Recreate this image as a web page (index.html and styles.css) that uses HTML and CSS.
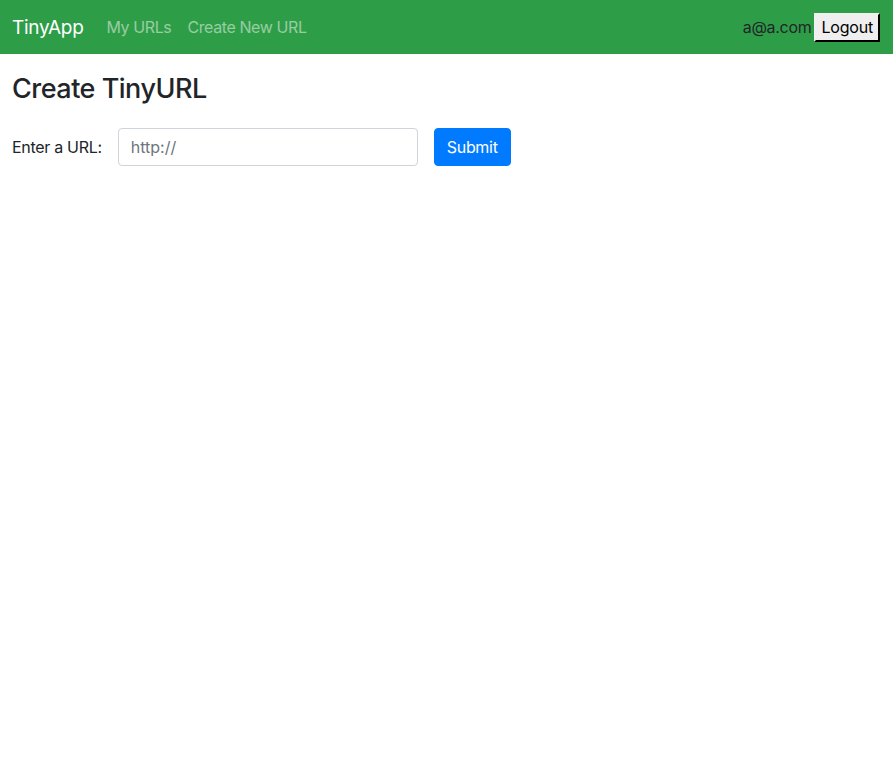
FILE: index.html
```html
<!DOCTYPE html>
<html>
<head>
<meta charset="utf-8">
<title>TinyApp</title>
<link rel="stylesheet" href="styles.css">
</head>
<body>
<nav class="navbar">
  <a class="brand" href="#">TinyApp</a>
  <div class="nav-links">
    <a class="nav-link" href="#">My URLs</a>
    <a class="nav-link" href="#">Create New URL</a>
  </div>
  <div class="user">
    <span class="email">a@a.com</span>
    <button class="logout">Logout</button>
  </div>
</nav>
<main class="content">
  <h3 class="title">Create TinyURL</h3>
  <form class="url-form">
    <label class="label" for="longURL">Enter a URL:</label>
    <input class="input" id="longURL" type="text" placeholder="http://">
    <button class="submit" type="button">Submit</button>
  </form>
</main>
</body>
</html>
```
FILE: styles.css
```css
* { box-sizing: border-box; }
body {
  margin: 0;
  font-family: Inter, "Noto Sans", Roboto, sans-serif;
  color: #212529;
  background: #fff;
  font-size: 16px;
}
.navbar {
  height: 54px;
  background: #2e9d47;
  display: flex;
  align-items: center;
  padding: 0 13px 0 12px;
}
.brand {
  color: #fff;
  text-decoration: none;
  font-size: 19px;
  margin-right: 23px;
  letter-spacing: -0.3px;
}
.nav-links { display: flex; gap: 16px; }
.nav-link {
  color: rgba(255,255,255,0.5);
  text-decoration: none;
  font-size: 16px;
  letter-spacing: -0.4px;
}
.user {
  margin-left: auto;
  display: flex;
  align-items: center;
  gap: 3px;
}
.email { color: #212529; font-size: 16px; letter-spacing: -0.3px; }
.logout {
  font-family: inherit;
  font-size: 16px;
  color: #000;
  background: #efefef;
  border: 2px outset #767676;
  border-color: #f0f0f0 #222 #222 #f0f0f0;
  padding: 1px 5px;
  height: 29px;
  letter-spacing: -0.2px;
}
.content { padding: 0 12px; }
.title {
  margin: 19px 0 23px;
  font-size: 27px;
  font-weight: 500;
  line-height: 1.2;
  letter-spacing: -0.5px;
}
.url-form {
  display: flex;
  align-items: center;
}
.label { margin-right: 16px; font-size: 16px; letter-spacing: -0.3px; }
.input {
  width: 300px;
  height: 38px;
  border: 1px solid #ced4da;
  border-radius: 4px;
  padding: 6px 12px;
  font-family: inherit;
  font-size: 16px;
  color: #495057;
}
.input::placeholder { color: #6c757d; opacity: 1; }
.submit {
  margin-left: 16px;
  height: 38px;
  padding: 6px 12px;
  background: #007bff;
  color: #fff;
  border: 1px solid #007bff;
  border-radius: 4px;
  font-family: inherit;
  font-size: 16px;
  letter-spacing: -0.3px;
}
```
